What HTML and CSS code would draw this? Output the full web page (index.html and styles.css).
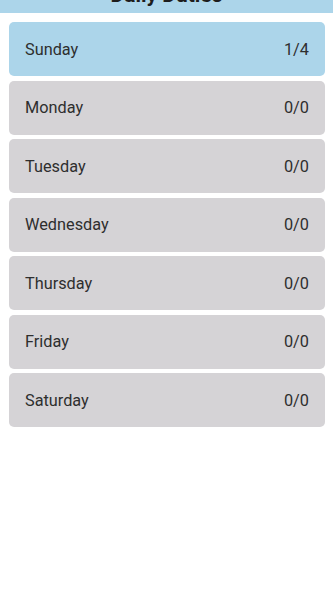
FILE: index.html
```html
<!DOCTYPE html>
<html>
<head>
<meta charset="utf-8">
<link rel="stylesheet" href="styles.css">
</head>
<body>
<header class="topbar"><h1 class="title">Daily Duties</h1></header>
<main class="days">
  <div class="day active"><span>Sunday</span><span>1/4</span></div>
  <div class="day"><span>Monday</span><span>0/0</span></div>
  <div class="day"><span>Tuesday</span><span>0/0</span></div>
  <div class="day"><span>Wednesday</span><span>0/0</span></div>
  <div class="day"><span>Thursday</span><span>0/0</span></div>
  <div class="day"><span>Friday</span><span>0/0</span></div>
  <div class="day"><span>Saturday</span><span>0/0</span></div>
</main>
</body>
</html>
```
FILE: styles.css
```css
html, body { margin: 0; padding: 0; background: #fff; }
body { font-family: Roboto, "Noto Sans", sans-serif; color: #222; }
.topbar {
  height: 13px;
  overflow: hidden;
  background: #acd5ea;
  display: flex;
  justify-content: center;
}
.title {
  margin: -15px 0 0;
  font-size: 21px;
  line-height: 20px;
  font-weight: 700;
  color: #1d1d1d;
}
.days {
  display: flex;
  flex-direction: column;
  gap: 4.5px;
  padding: 9px 8px 0 9px;
}
.day {
  height: 54px;
  border-radius: 5px;
  background: #d5d3d6;
  display: flex;
  align-items: center;
  justify-content: space-between;
  padding: 0 16px;
  font-size: 16.3px;
  color: #2e2e2e;
  box-sizing: border-box;
}
.day.active { background: #acd5ea; }
```
